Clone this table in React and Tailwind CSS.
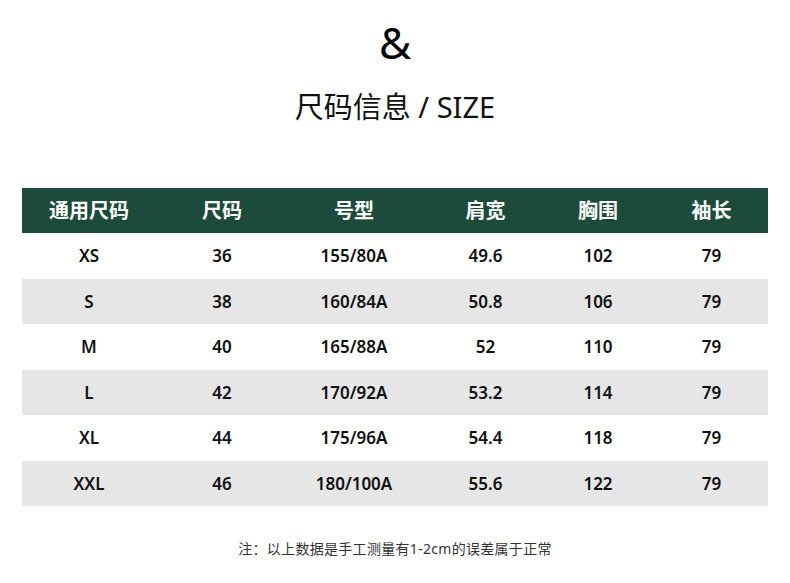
const headers = ["通用尺码", "尺码", "号型", "肩宽", "胸围", "袖长"];

const rows = [
  ["XS", "36", "155/80A", "49.6", "102", "79"],
  ["S", "38", "160/84A", "50.8", "106", "79"],
  ["M", "40", "165/88A", "52", "110", "79"],
  ["L", "42", "170/92A", "53.2", "114", "79"],
  ["XL", "44", "175/96A", "54.4", "118", "79"],
  ["XXL", "46", "180/100A", "55.6", "122", "79"],
];

const font = { fontFamily: '"Noto Sans", "Noto Sans CJK SC", sans-serif' };

const App = () => {
  return (
    <div className="w-[790px] h-[583px] bg-white flex flex-col items-center" style={font}>
      <div className="mt-[12px] text-[44px] leading-[60px] text-black">&amp;</div>
      <div className="mt-[17px] text-[29px] leading-[36px] text-[#111]">尺码信息 / SIZE</div>

      {/* size table */}
      <div className="mt-[63px] w-[746px] self-start ml-[22px]">
        <div className="grid grid-cols-[134px_132px_132px_121px_114px_113px] h-[45px] bg-[#1d4b3b] items-center text-white text-[20px] font-bold">
          {headers.map((h, i) => (
            <div key={h} className={`text-center ${i === 3 ? "pl-[10px]" : ""}`}>
              {h}
            </div>
          ))}
        </div>
        {rows.map((r, idx) => (
          <div
            key={r[0]}
            className={`grid grid-cols-[134px_132px_132px_121px_114px_113px] h-[45.5px] items-center text-[17px] font-semibold text-[#111] ${
              idx % 2 === 1 ? "bg-[#e6e6e6]" : "bg-white"
            }`}
          >
            {r.map((c, i) => (
              <div key={i} className={`text-center ${i === 3 ? "pl-[10px]" : ""}`}>
                {c}
              </div>
            ))}
          </div>
        ))}
      </div>

      <div className="mt-[32px] text-[14px] tracking-[0.3px] text-[#333]">注：以上数据是手工测量有1-2cm的误差属于正常</div>
    </div>
  );
};

export default App;
